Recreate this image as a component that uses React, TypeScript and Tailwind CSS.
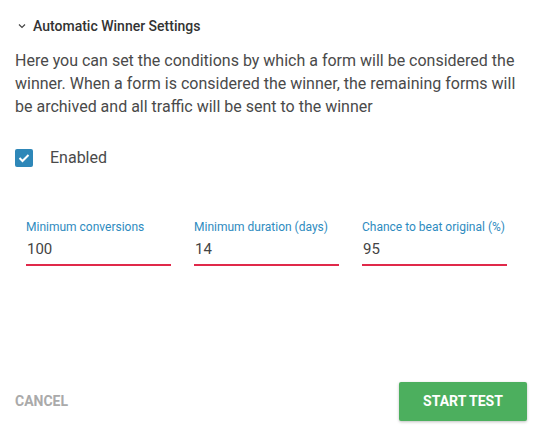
import React from "react";

function Field({ label, value }: { label: string; value: string }) {
  return (
    <div className="flex flex-col w-[145px]">
      <span className="text-[12px] leading-[14px] text-[#2e8bc0]">{label}</span>
      <span className="mt-[6px] text-[15px] leading-[18px] text-[#444] pl-px">{value}</span>
      <div className="mt-[6px] h-[2px] bg-[#e0294a]" />
    </div>
  );
}

export default function App() {
  return (
    <div className="w-[555px] h-[435px] bg-white flex flex-col" style={{ fontFamily: "Roboto, sans-serif" }}>
      <div className="flex items-center pl-[18px] pt-[17px] h-[35px]">
        <svg width="8" height="6" viewBox="0 0 8 6" className="mr-[7px]">
          <path d="M1 1.5 L4 4.5 L7 1.5" fill="none" stroke="#444" strokeWidth="1.2" />
        </svg>
        <span className="text-[14px] font-medium text-[#333]">Automatic Winner Settings</span>
      </div>
      <p className="mt-[14px] pl-[15px] pr-[30px] text-[16px] leading-[23px] text-[#4a4a4a]">
        Here you can set the conditions by which a form will be considered the winner. When a form is considered the winner, the remaining forms will be archived and all traffic will be sent to the winner
      </p>
      <div className="flex items-center mt-[28px] pl-[15px]">
        <div className="w-[18px] h-[18px] rounded-[2px] bg-[#2e87b8] flex items-center justify-center">
          <svg width="12" height="10" viewBox="0 0 12 10">
            <path d="M1.5 5 L4.5 8 L10.5 2" fill="none" stroke="white" strokeWidth="2" />
          </svg>
        </div>
        <span className="ml-[17px] text-[16px] text-[#4a4a4a]">Enabled</span>
      </div>
      <div className="flex gap-[23px] pl-[26px] mt-[50px]">
        <Field label="Minimum conversions" value="100" />
        <Field label="Minimum duration (days)" value="14" />
        <Field label="Chance to beat original (%)" value="95" />
      </div>
      <div className="flex items-center justify-between mt-auto mb-[14px] pl-[15px] pr-[28px]">
        <span className="text-[14px] font-bold text-[#aaa]">CANCEL</span>
        <button className="w-[128px] h-[39px] rounded-[2px] bg-[#4caf5e] text-white text-[14px] font-bold shadow-[0_1px_3px_rgba(0,0,0,0.25)]">
          START TEST
        </button>
      </div>
    </div>
  );
}
